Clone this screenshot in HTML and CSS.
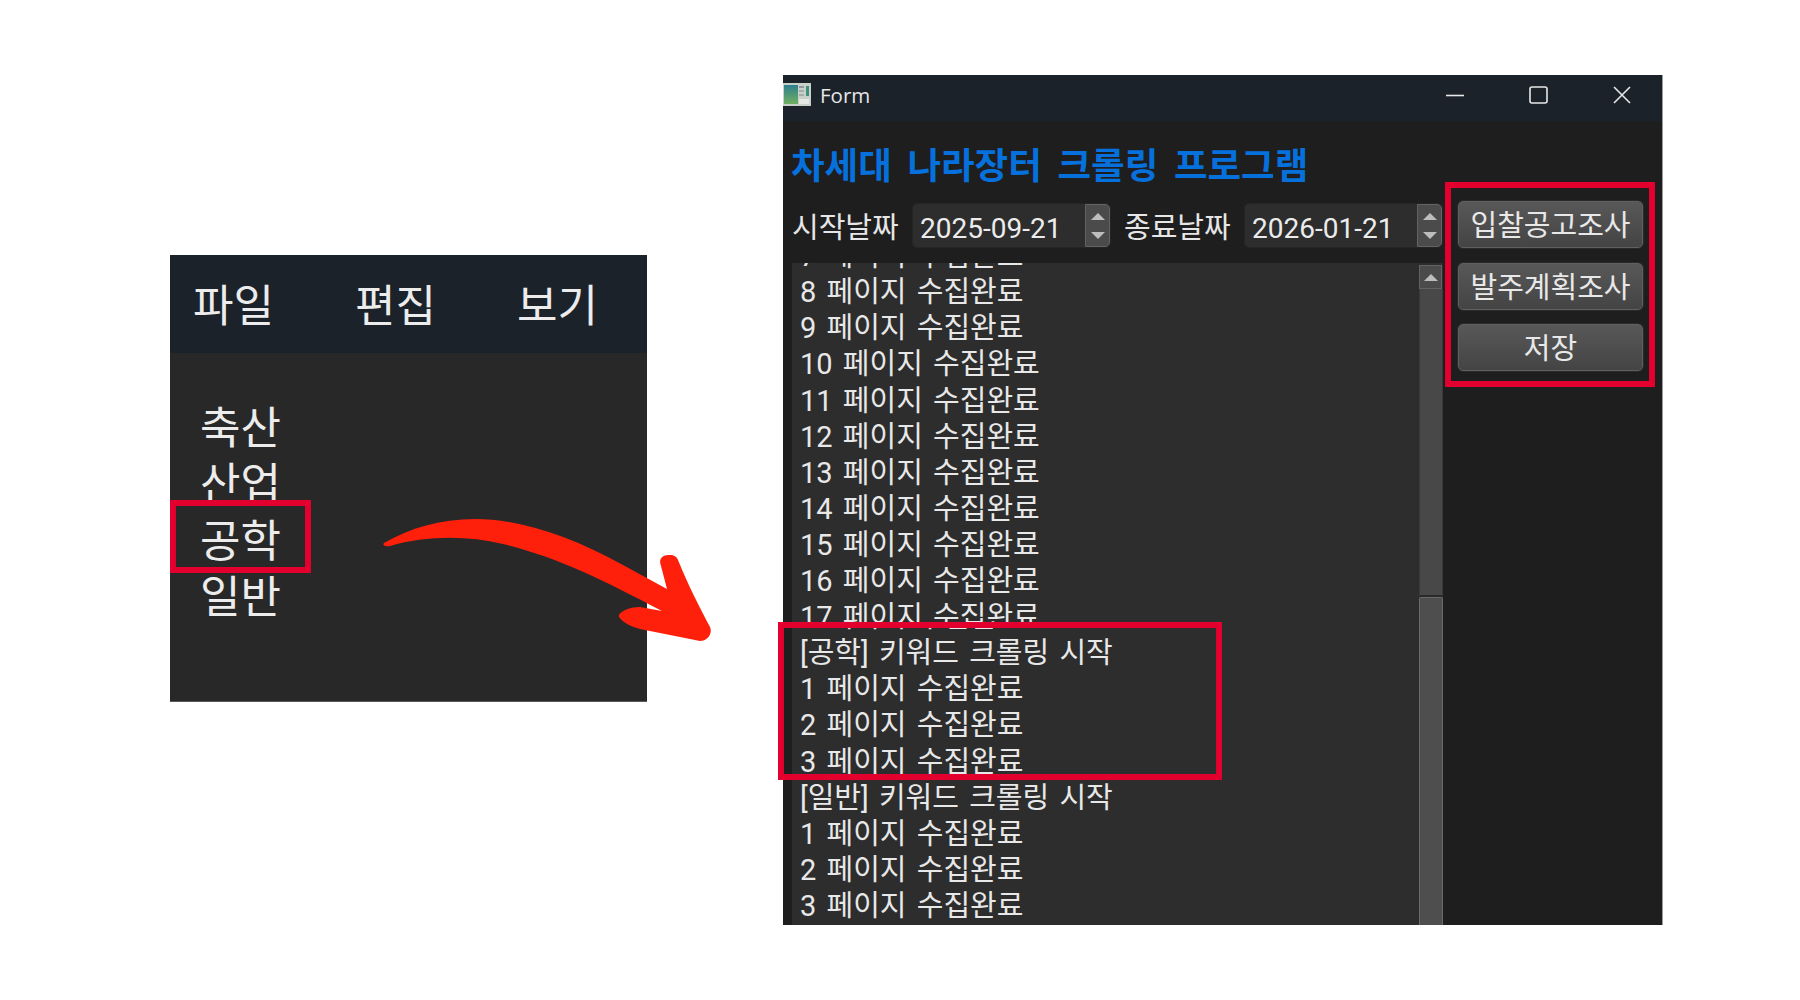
FILE: index.html
```html
<!DOCTYPE html>
<html lang="ko">
  <head>
    <meta charset="UTF-8" />
    <title>Form</title>
    <link rel="stylesheet" href="styles.css">
  </head>
  <body>
    <div class="stage">
      <div class="menu-panel">
        <div class="menu-bar">
          <span>파일</span>
          <span>편집</span>
          <span>보기</span>
        </div>
        <div class="category-list">
          <div class="category">축산</div>
          <div class="category category-clipped">산업</div>
          <div class="category category-picked">공학</div>
          <div class="category">일반</div>
        </div>
        <div class="red-box red-box-category"></div>
      </div>

      <div class="window">
        <div class="title-bar">
          <svg class="app-icon" width="28" height="23" viewBox="0 0 28 23">
            <defs>
              <linearGradient id="pic" x1="0" y1="0" x2="0" y2="1">
                <stop offset="0" stop-color="#2f7f8f" />
                <stop offset="1" stop-color="#6fb05f" />
              </linearGradient>
            </defs>
            <rect width="28" height="23" fill="#c9cfc9" />
            <rect x="1" y="2" width="14" height="19" fill="url(#pic)" />
            <rect x="16" y="3" width="5" height="2" fill="#8f9a9a" />
            <rect x="16" y="7" width="5" height="2" fill="#a5aeae" />
            <rect x="16" y="11" width="5" height="2" fill="#a5aeae" />
            <rect x="23" y="3" width="3" height="10" fill="#3f8f7f" />
            <rect x="16" y="16" width="10" height="5" fill="#e6e8e6" />
          </svg>
          <span class="title-text">Form</span>
          <div class="window-controls">
            <svg width="18" height="18" viewBox="0 0 18 18"><path d="M0 9.5h18" stroke="#e8e8e8" stroke-width="1.6" /></svg>
            <svg width="19" height="18" viewBox="0 0 19 18"><rect x="1" y="1" width="17" height="16" rx="2" fill="none" stroke="#e8e8e8" stroke-width="1.6" /></svg>
            <svg width="18" height="18" viewBox="0 0 18 18"><path d="M1 1l16 16M17 1L1 17" stroke="#e8e8e8" stroke-width="1.6" /></svg>
          </div>
        </div>

        <div class="window-body">
          <h1 class="app-heading">차세대 나라장터 크롤링 프로그램</h1>

          <div class="main-row">
            <div class="left-col">
              <div class="date-row">
                <span class="date-label">시작날짜</span>
                <div class="date-field">
                  <span class="date-value">2025-09-21</span>
                  <div class="spin"><i class="arrow-up"></i><i class="arrow-down"></i></div>
                </div>
                <span class="date-label">종료날짜</span>
                <div class="date-field">
                  <span class="date-value">2026-01-21</span>
                  <div class="spin"><i class="arrow-up"></i><i class="arrow-down"></i></div>
                </div>
              </div>

              <div class="log-wrap">
                <div class="log">
                  <div class="log-part log-part-top">
                    <div class="log-row">7 페이지 수집완료</div>
                    <div class="log-row">8 페이지 수집완료</div>
                    <div class="log-row">9 페이지 수집완료</div>
                    <div class="log-row">10 페이지 수집완료</div>
                    <div class="log-row">11 페이지 수집완료</div>
                    <div class="log-row">12 페이지 수집완료</div>
                    <div class="log-row">13 페이지 수집완료</div>
                    <div class="log-row">14 페이지 수집완료</div>
                    <div class="log-row">15 페이지 수집완료</div>
                    <div class="log-row">16 페이지 수집완료</div>
                    <div class="log-row">17 페이지 수집완료</div>
                  </div>
                  <div class="log-part log-part-bottom">
                    <div class="log-row">5 페이지 수집완료</div>
                    <div class="log-row">[공학] 키워드 크롤링 시작</div>
                    <div class="log-row">1 페이지 수집완료</div>
                    <div class="log-row">2 페이지 수집완료</div>
                    <div class="log-row">3 페이지 수집완료</div>
                    <div class="log-row">[일반] 키워드 크롤링 시작</div>
                    <div class="log-row">1 페이지 수집완료</div>
                    <div class="log-row">2 페이지 수집완료</div>
                    <div class="log-row">3 페이지 수집완료</div>
                  </div>
                </div>
                <div class="scrollbar">
                  <div class="scroll-btn"><i class="arrow-up"></i></div>
                  <div class="scroll-track"></div>
                  <div class="scroll-thumb"></div>
                </div>
              </div>
            </div>

            <div class="button-col">
              <button class="action-btn">입찰공고조사</button>
              <button class="action-btn">발주계획조사</button>
              <button class="action-btn">저장</button>
            </div>
          </div>
        </div>

        <div class="red-box red-box-buttons"></div>
        <div class="red-box red-box-log"></div>
      </div>

      <svg class="big-arrow" width="360" height="160" viewBox="0 0 360 160">
        <path fill="#fe200b" d="M14 43C40 28 70 19 105 19C150 19 200 36 253 65L297 89L291 66C288 58 293 55 300 55C304 55 307 57 308 60C318 85 330 108 340 127C343 134 337 141 330 141L270 129C262 127 252 122 249 117C247 113 258 107 270 107L292 111C233 80 187 57 133 44C95 35 55 36 20 46C15 47 12 45 14 43Z" />
      </svg>
    </div>
  </body>
</html>
```
FILE: styles.css
```css
* {
  box-sizing: border-box;
}

body {
  margin: 0;
  background: #fff;
  font-family: "Noto Sans CJK KR", sans-serif;
  color: #ececec;
}

.stage {
  position: relative;
  width: 1800px;
  height: 1000px;
  overflow: hidden;
  display: flex;
  align-items: flex-start;
  padding-left: 170px;
}

.red-box {
  position: absolute;
  border: 6px solid #e4002e;
}

/* left picture */
.menu-panel {
  position: relative;
  width: 477px;
  height: 447px;
  margin-top: 255px;
  background: #282828;
  border-bottom: 1px solid #5a5a5a;
}

.menu-bar {
  display: flex;
  gap: 81px;
  height: 98px;
  padding: 0 0 3px 23px;
  align-items: center;
  background: #1b222a;
  font-size: 44px;
  line-height: 1;
}

.category-list {
  padding: 44px 0 0 30px;
  font-size: 44px;
}

.category {
  height: 56px;
  line-height: 56px;
}

.category-clipped {
  height: 47px;
  overflow: hidden;
}

.category-picked {
  margin-top: 10px;
}

.red-box-category {
  left: 0;
  top: 245px;
  width: 141px;
  height: 73px;
}

.big-arrow {
  position: absolute;
  left: 370px;
  top: 500px;
}

/* right picture */
.window {
  position: relative;
  width: 880px;
  height: 850px;
  margin: 75px 0 0 136px;
  background: #1e1e1e;
  border-right: 1px solid #9a9a9a;
}

.title-bar {
  display: flex;
  align-items: center;
  height: 46px;
  padding-bottom: 7px;
  background: #1b222a;
}

.title-text {
  margin-left: 9px;
  font-family: "Open Sans", sans-serif;
  font-size: 20.5px;
  color: #e6e6e6;
}

.window-controls {
  display: flex;
  gap: 65px;
  margin-left: auto;
  padding-right: 31px;
}

.window-body {
  padding-left: 9px;
  height: 804px;
}

.app-heading {
  margin: 0 0 0 -1px;
  height: 80px;
  padding-top: 18px;
  font-size: 36.5px;
  line-height: 50px;
  font-weight: 700;
  word-spacing: 5.5px;
  color: #0670dc;
}

.main-row {
  display: flex;
  gap: 15px;
}

.left-col {
  width: 651px;
  padding-top: 2px;
}

.date-row {
  display: flex;
  align-items: center;
  height: 45px;
}

.date-label {
  width: 120px;
  font-size: 29px;
  line-height: 45px;
  margin-top: -1px;
  color: #e6e6e6;
}

.date-field {
  display: flex;
  width: 199px;
  height: 45px;
  margin-right: 13px;
  background: #2d2d2d;
  border: 1px solid #252525;
  border-radius: 5px;
}

.date-field:last-child {
  margin-right: 0;
}

.date-value {
  flex: 1;
  padding-left: 7px;
  font-family: Roboto, sans-serif;
  font-size: 28px;
  line-height: 50px;
}

.spin {
  display: flex;
  flex-direction: column;
  align-items: center;
  justify-content: center;
  gap: 12px;
  width: 25px;
  background: #4b4b4b;
  border: 1px solid #626262;
  border-radius: 0 5px 5px 0;
}

.arrow-up,
.arrow-down {
  display: block;
  width: 0;
  height: 0;
  border-left: 7px solid transparent;
  border-right: 7px solid transparent;
}

.arrow-up {
  border-bottom: 7px solid #bdbdbd;
}

.arrow-down {
  border-top: 7px solid #bdbdbd;
}

.log-wrap {
  display: flex;
  height: 662px;
  margin-top: 15px;
}

.log {
  flex: 1;
  background: #2d2d2d;
  font-size: 29px;
  word-spacing: 3px;
}

.log-part {
  overflow: hidden;
  padding-left: 8px;
  font-family: Roboto, "Noto Sans CJK KR", sans-serif;
}

.log-part-top {
  height: 359px;
}

.log-part-top .log-row:first-child {
  margin-top: -25px;
}

.log-part-bottom {
  height: 303px;
}

.log-part-bottom .log-row:first-child {
  margin-top: -23px;
}

.log-row {
  height: 36.15px;
  line-height: 36px;
  white-space: nowrap;
  color: #e8e8e8;
}

.scrollbar {
  display: flex;
  flex-direction: column;
  width: 24px;
  background: #2d2d2d;
}

.scroll-btn {
  display: flex;
  align-items: center;
  justify-content: center;
  width: 23px;
  height: 24px;
  margin-top: 2px;
  background: #4b4b4b;
  border: 1px solid #626262;
}

.scroll-track {
  height: 308px;
  background: #484848;
  border-right: 1px solid #3a3a3a;
  border-left: 1px solid #3a3a3a;
  border-bottom: 2px solid #2a2a2a;
}

.scroll-thumb {
  flex: 1;
  background: #4e4e4e;
  border: 1px solid #6a6a6a;
  border-bottom: none;
  border-radius: 2px 2px 0 0;
}

.button-col {
  display: flex;
  flex-direction: column;
  gap: 14.5px;
  width: 185px;
}

.action-btn {
  height: 47px;
  padding: 0 0 2px;
  font-family: inherit;
  font-size: 29px;
  line-height: 1;
  color: #e8e8e8;
  background: linear-gradient(to bottom, #585858, #444);
  border: 1px solid #606060;
  border-radius: 5px;
  box-shadow: 0 0 0 1px #2a2a2a;
}

.red-box-buttons {
  left: 662px;
  top: 107px;
  width: 210px;
  height: 205px;
}

.red-box-log {
  left: -5px;
  top: 547px;
  width: 444px;
  height: 158px;
}
```
